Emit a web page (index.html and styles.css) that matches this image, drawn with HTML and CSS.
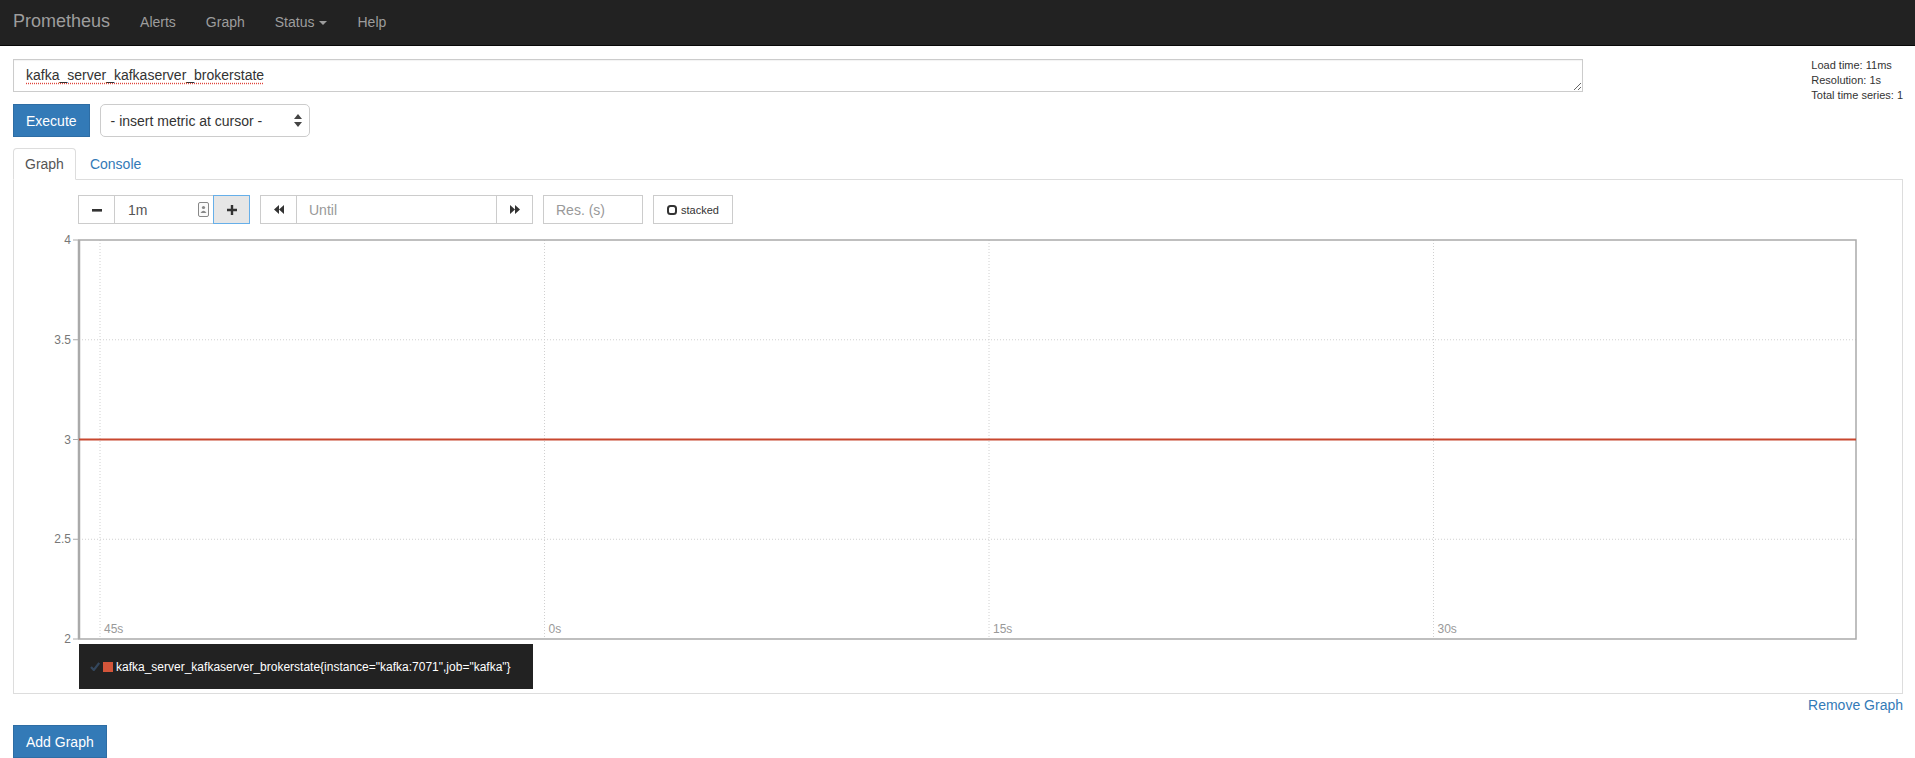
FILE: index.html
```html
<!DOCTYPE html>
<html lang="en">
<head>
    <meta charset="UTF-8">
    <title>Prometheus Time Series Collection and Processing Server</title>
    <link rel="stylesheet" href="styles.css">
</head>
<body>
    <nav class="navbar">
        <a class="brand" href="#">Prometheus</a>
        <ul class="nav-links">
            <li><a href="#">Alerts</a></li>
            <li><a href="#">Graph</a></li>
            <li><a href="#">Status <span class="caret"></span></a></li>
            <li><a href="#">Help</a></li>
        </ul>
    </nav>

    <div class="main">
        <div class="query-grid">
            <textarea class="expression" rows="1">kafka_server_kafkaserver_brokerstate</textarea>
            <div class="eval-stats">
                <div>Load time: 11ms</div>
                <div>Resolution: 1s</div>
                <div>Total time series: 1</div>
            </div>
            <div class="execute-row">
                <button class="btn btn-primary">Execute</button>
                <div class="metric-select">
                    <span>- insert metric at cursor -</span>
                    <svg width="8" height="13" viewBox="0 0 8 13"><path d="M4 0 L8 5 H0 Z M0 8 H8 L4 13 Z" fill="#444"/></svg>
                </div>
            </div>
        </div>

        <ul class="tabs">
            <li class="active"><a href="#">Graph</a></li>
            <li><a href="#">Console</a></li>
        </ul>

        <div class="tab-panel">
            <div class="graph-controls">
                <div class="input-group">
                    <button class="ctl-btn">
                        <svg width="10" height="10" viewBox="0 0 10 10"><rect x="0" y="4" width="10" height="2.6" fill="#333"/></svg>
                    </button>
                    <div class="ctl-input range-input">
                        <span>1m</span>
                        <svg width="11" height="15" viewBox="0 0 11 15"><rect x="0.5" y="0.5" width="10" height="14" rx="1.5" fill="#fafafa" stroke="#888"/><circle cx="5.5" cy="5.5" r="1.6" fill="#888"/><path d="M2.5 11 Q5.5 6.5 8.5 11 Z" fill="#888"/></svg>
                    </div>
                    <button class="ctl-btn active">
                        <svg width="10" height="10" viewBox="0 0 10 10"><path d="M3.8 0 H6.2 V3.8 H10 V6.2 H6.2 V10 H3.8 V6.2 H0 V3.8 H3.8 Z" fill="#333"/></svg>
                    </button>
                </div>
                <div class="input-group">
                    <button class="ctl-btn">
                        <svg width="10" height="9" viewBox="0 0 10 9"><path d="M5 0 V9 L0 4.5 Z M10 0 V9 L5 4.5 Z" fill="#333"/></svg>
                    </button>
                    <input class="ctl-input until-input" type="text" placeholder="Until">
                    <button class="ctl-btn">
                        <svg width="10" height="9" viewBox="0 0 10 9"><path d="M0 0 V9 L5 4.5 Z M5 0 V9 L10 4.5 Z" fill="#333"/></svg>
                    </button>
                </div>
                <input class="ctl-input res-input" type="text" placeholder="Res. (s)">
                <button class="ctl-btn stacked-btn">
                    <svg width="10" height="10" viewBox="0 0 10 10"><rect x="1" y="1" width="8" height="8" rx="2.5" fill="none" stroke="#333" stroke-width="2"/></svg>
                    stacked
                </button>
            </div>

            <svg class="chart" width="1850" height="410" viewBox="0 0 1850 410">
                <g stroke="#d0d0d0" stroke-width="1" stroke-dasharray="1 2">
                    <line x1="65" y1="109.75" x2="1842" y2="109.75"/>
                    <line x1="65" y1="209.5" x2="1842" y2="209.5"/>
                    <line x1="65" y1="309.25" x2="1842" y2="309.25"/>
                    <line x1="86" y1="10" x2="86" y2="409"/>
                    <line x1="530.5" y1="10" x2="530.5" y2="409"/>
                    <line x1="975" y1="10" x2="975" y2="409"/>
                    <line x1="1419.5" y1="10" x2="1419.5" y2="409"/>
                </g>
                <rect x="65" y="10" width="1777" height="399" fill="none" stroke="#aaa" stroke-width="1.5"/>
                <line x1="65" y1="10" x2="65" y2="409" stroke="#aaa" stroke-width="2.5"/>
                <g stroke="#aaa" stroke-width="1">
                    <line x1="59" y1="10" x2="65" y2="10"/>
                    <line x1="59" y1="109.75" x2="65" y2="109.75"/>
                    <line x1="59" y1="209.5" x2="65" y2="209.5"/>
                    <line x1="59" y1="309.25" x2="65" y2="309.25"/>
                    <line x1="59" y1="409" x2="65" y2="409"/>
                </g>
                <line x1="65" y1="209.5" x2="1842" y2="209.5" stroke="#c8472e" stroke-width="2"/>
                <g class="y-labels" text-anchor="end">
                    <text x="57" y="14">4</text>
                    <text x="57" y="114">3.5</text>
                    <text x="57" y="214">3</text>
                    <text x="57" y="313">2.5</text>
                    <text x="57" y="413">2</text>
                </g>
                <g class="x-labels">
                    <text x="90" y="403">45s</text>
                    <text x="534.5" y="403">0s</text>
                    <text x="979" y="403">15s</text>
                    <text x="1423.5" y="403">30s</text>
                </g>
            </svg>

            <div class="legend">
                <svg class="legend-check" width="10" height="9" viewBox="0 0 10 9"><path d="M1 5 L3.8 8 L9.2 1" fill="none" stroke="#34475d" stroke-width="2.2"/></svg>
                <span class="legend-swatch"></span>
                <span class="legend-label">kafka_server_kafkaserver_brokerstate{instance="kafka:7071",job="kafka"}</span>
            </div>
        </div>

        <div class="remove-row"><a href="#">Remove Graph</a></div>

        <button class="btn btn-primary add-graph">Add Graph</button>
    </div>
</body>
</html>
```

FILE: styles.css
```css
* {
    box-sizing: border-box;
}

body {
    margin: 0;
    font-family: "Liberation Sans", Arial, sans-serif;
    font-size: 14px;
    color: #333;
    background: #fff;
    overflow: hidden;
}

/* Navbar */
.navbar {
    height: 46px;
    background: #222;
    border-bottom: 1px solid #080808;
    display: flex;
    align-items: flex-start;
}

.brand {
    color: #9d9d9d;
    font-size: 18px;
    line-height: 42px;
    padding: 0 15px 0 13px;
    text-decoration: none;
}

.nav-links {
    display: flex;
    list-style: none;
    margin: 0;
    padding: 0;
}

.nav-links a {
    display: flex;
    align-items: center;
    color: #9d9d9d;
    text-decoration: none;
    padding: 0 15px;
    line-height: 44px;
}

.caret {
    display: inline-block;
    width: 0;
    height: 0;
    margin-left: 5px;
    margin-top: 1px;
    border-top: 4px solid #9d9d9d;
    border-left: 4px solid transparent;
    border-right: 4px solid transparent;
}

/* Page */
.main {
    padding: 13px 12px 0 13px;
}

.query-grid {
    display: grid;
    grid-template-columns: 1570px 1fr;
    grid-template-rows: auto auto;
    row-gap: 12px;
    align-items: start;
}

.expression {
    grid-column: 1;
    grid-row: 1;
    width: 1570px;
    height: 33px;
    margin: 0;
    padding: 6px 12px;
    border: 1px solid #ccc;
    font-family: "Liberation Sans", Arial, sans-serif;
    font-size: 14px;
    line-height: 19px;
    color: #333;
    resize: vertical;
    text-decoration: underline dotted #e0433a;
    text-underline-offset: 3px;
    box-shadow: inset 0 1px 1px rgba(0, 0, 0, 0.05);
}

.eval-stats {
    grid-column: 2;
    grid-row: 1 / span 2;
    justify-self: end;
    margin-top: -1px;
    font-size: 11px;
    line-height: 15px;
}

.execute-row {
    grid-column: 1;
    grid-row: 2;
    display: flex;
    gap: 10px;
}

.btn {
    height: 33px;
    padding: 0 12px;
    font-family: "Liberation Sans", Arial, sans-serif;
    font-size: 14px;
    border: 1px solid transparent;
    cursor: pointer;
}

.btn-primary {
    background: #337ab7;
    border-color: #2e6da4;
    color: #fff;
}

.metric-select {
    width: 210px;
    height: 33px;
    border: 1px solid #ccc;
    border-radius: 5px;
    padding: 0 7px 0 10px;
    display: flex;
    align-items: center;
    justify-content: space-between;
    color: #333;
}

/* Tabs */
.tabs {
    display: flex;
    list-style: none;
    margin: 11px 0 0;
    padding: 0;
    border-bottom: 1px solid #ddd;
}

.tabs li {
    margin-bottom: -1px;
    margin-right: 2px;
}

.tabs a {
    display: block;
    padding: 5px 11px;
    line-height: 20px;
    border: 1px solid transparent;
    border-radius: 4px 4px 0 0;
    color: #337ab7;
    text-decoration: none;
}

.tabs li.active a {
    color: #555;
    background: #fff;
    border-color: #ddd #ddd transparent;
}

.tab-panel {
    border: 1px solid #ddd;
    border-top: 0;
    padding: 15px 0 4px;
}

/* Graph controls */
.graph-controls {
    display: flex;
    gap: 10px;
    margin-left: 64px;
    height: 29px;
}

.input-group {
    display: flex;
}

.ctl-btn {
    width: 37px;
    height: 29px;
    border: 1px solid #ccc;
    background: #fff;
    display: flex;
    align-items: center;
    justify-content: center;
    padding: 0;
    margin: 0;
}

.ctl-btn.active {
    background: #e6e6e6;
    border-color: #66afe9;
    margin-left: -1px;
}

.ctl-input {
    height: 29px;
    border: 1px solid #ccc;
    margin: 0 0 0 -1px;
    padding: 0 12px;
    font-family: "Liberation Sans", Arial, sans-serif;
    font-size: 14px;
    color: #555;
    background: #fff;
}

.ctl-input::placeholder {
    color: #999;
}

.range-input {
    width: 100px;
    display: flex;
    align-items: center;
    justify-content: space-between;
    padding: 0 4px 0 13px;
}

.until-input {
    width: 201px;
    margin-right: -1px;
}

.res-input {
    width: 100px;
    margin-left: 0;
}

.stacked-btn {
    width: 80px;
    gap: 4px;
    font-family: "Liberation Sans", Arial, sans-serif;
    font-size: 11px;
    color: #333;
}

/* Chart */
.chart {
    display: block;
    margin-top: 6px;
    overflow: visible;
}

.y-labels {
    font-family: "Liberation Sans", Arial, sans-serif;
    font-size: 12px;
    fill: #777;
}

.x-labels {
    font-family: "Liberation Sans", Arial, sans-serif;
    font-size: 12px;
    fill: #999;
}

.legend {
    display: inline-flex;
    align-items: center;
    height: 45px;
    margin: 4px 0 0 65px;
    padding: 0 22px 0 11px;
    background: #222;
    color: #fff;
    font-size: 12px;
}

.legend-check {
    margin-right: 3px;
}

.legend-swatch {
    width: 10px;
    height: 10px;
    background: #d3553a;
    margin-right: 3px;
}

.remove-row {
    text-align: right;
    line-height: 20px;
    padding-top: 1px;
}

.remove-row a {
    color: #337ab7;
    text-decoration: none;
}

.add-graph {
    margin-top: 10px;
}
```
